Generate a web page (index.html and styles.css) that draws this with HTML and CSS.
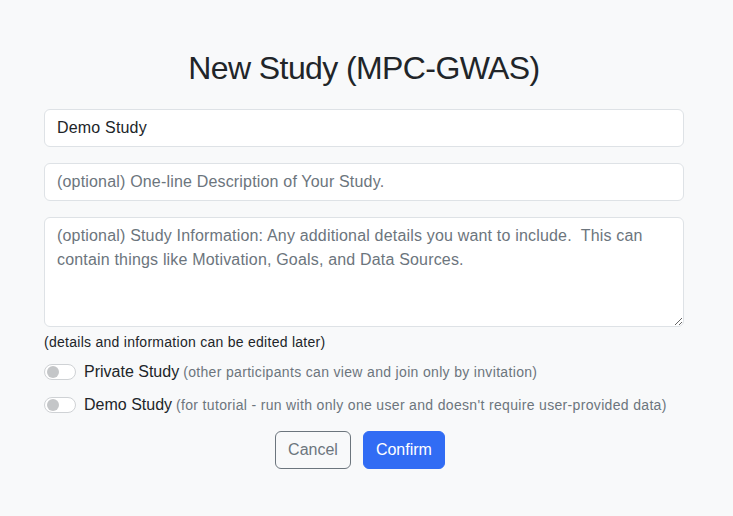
FILE: index.html
```html
<!DOCTYPE html>
<html lang="en">
<head>
<meta charset="utf-8">
<title>New Study (MPC-GWAS)</title>
<link rel="stylesheet" href="styles.css">
</head>
<body>
<div class="wrap">
  <h2 class="title">New Study (MPC-GWAS)</h2>
  <input class="field" type="text" value="Demo Study">
  <input class="field" type="text" placeholder="(optional) One-line Description of Your Study.">
  <textarea class="field area" placeholder="(optional) Study Information: Any additional details you want to include.  This can contain things like Motivation, Goals, and Data Sources."></textarea>
  <div class="note">(details and information can be edited later)</div>
  <div class="check">
    <span class="switch"><span class="knob"></span></span>
    <span class="label">Private Study</span>
    <span class="muted">(other participants can view and join only by invitation)</span>
  </div>
  <div class="check">
    <span class="switch"><span class="knob"></span></span>
    <span class="label">Demo Study</span>
    <span class="muted">(for tutorial - run with only one user and doesn't require user-provided data)</span>
  </div>
  <div class="actions">
    <button class="btn btn-outline">Cancel</button>
    <button class="btn btn-primary">Confirm</button>
  </div>
</div>
</body>
</html>
```
FILE: styles.css
```css
html, body {
  margin: 0;
  padding: 0;
  background: #f8f9fa;
  font-family: "Liberation Sans", Arial, sans-serif;
  color: #212529;
}
.wrap {
  width: 640px;
  margin-left: 44px;
  padding-top: 49px;
}
.title {
  margin: 0 0 22px;
  text-align: center;
  font-size: 32px;
  line-height: 38px;
  font-weight: 400;
  letter-spacing: -0.6px;
  color: #212529;
}
.field {
  display: block;
  box-sizing: border-box;
  width: 640px;
  height: 38px;
  margin: 0 0 16px;
  padding: 6px 12px;
  border: 1px solid #dee2e6;
  border-radius: 6px;
  background: #fff;
  font-family: "Liberation Sans", Arial, sans-serif;
  font-size: 16px;
  line-height: 24px;
  letter-spacing: 0.18px;
  color: #212529;
  outline: none;
}
.field::placeholder {
  color: #6c757d;
  opacity: 1;
}
.area {
  height: 110px;
  margin-bottom: 5px;
  resize: vertical;
}
.note {
  font-size: 14px;
  line-height: 21px;
  letter-spacing: 0.27px;
  color: #212529;
  margin-bottom: 7px;
}
.check {
  display: flex;
  align-items: center;
  height: 24px;
  margin-bottom: 9px;
  font-size: 16px;
  white-space: nowrap;
}
.switch {
  box-sizing: border-box;
  width: 32px;
  height: 16px;
  border: 1px solid #cfd2d5;
  border-radius: 8px;
  background: #fff;
  display: flex;
  align-items: center;
  padding-left: 2px;
  margin-right: 8px;
  flex: none;
}
.knob {
  width: 12px;
  height: 12px;
  border-radius: 50%;
  background: #c4c6c8;
}
.label {
  color: #212529;
}
.muted {
  margin-left: 4px;
  font-size: 14px;
  letter-spacing: 0.33px;
  color: #6c757d;
}
.actions {
  display: flex;
  justify-content: center;
  gap: 12px;
  padding-right: 8px;
  margin-top: 14px;
}
.btn {
  box-sizing: border-box;
  height: 38px;
  padding: 6px 12px;
  border-radius: 6px;
  font-family: "Liberation Sans", Arial, sans-serif;
  font-size: 16px;
  line-height: 24px;
  cursor: pointer;
}
.btn-outline {
  background: transparent;
  border: 1px solid #6c757d;
  color: #6c757d;
}
.btn-primary {
  background: #316cf4;
  border: 1px solid #316cf4;
  color: #fff;
}
```
